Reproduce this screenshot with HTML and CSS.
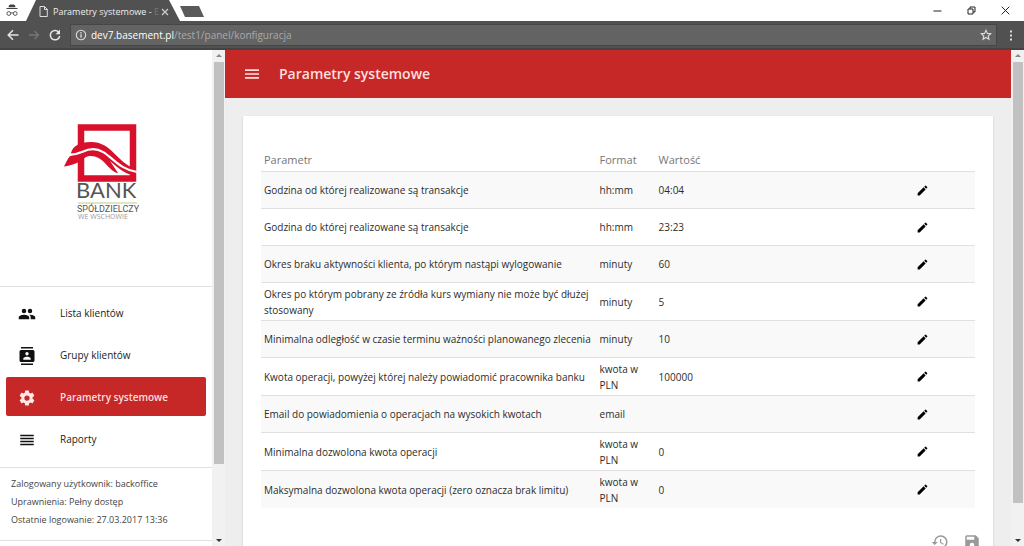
FILE: index.html
```html
<!DOCTYPE html>
<html lang="pl">
<head>
<meta charset="utf-8">
<meta name="viewport" content="width=device-width, initial-scale=1">
<title>Parametry systemowe</title>
<link rel="stylesheet" href="styles.css">
</head>
<body>
<svg class="sprite" aria-hidden="true">
  <symbol id="edit" viewBox="0 0 24 24"><path d="M3 17.25V21h3.75L17.81 9.94l-3.75-3.75L3 17.25zM20.71 7.04a1 1 0 0 0 0-1.41l-2.34-2.34a1 1 0 0 0-1.41 0l-1.83 1.83 3.75 3.75 1.83-1.83z"/></symbol>
</svg>
<div class="tabstrip">
  <svg class="incognito" viewBox="0 0 12 13" aria-hidden="true"><path d="M3 1.2 4.3.6h3.4l1.3.6.5 2H2.500zM.5 4h11v1H.5z" fill="#444"/><g fill="none" stroke="#555"><circle cx="2.800" cy="9.500" r="1.900"/><circle cx="9.200" cy="9.500" r="1.900"/><path d="M4.700 9.200q1.300-.8 2.600 0"/></g></svg>
  <div class="tab">
    <svg class="page-icon" viewBox="0 0 9 11" aria-hidden="true"><path d="M1 .5h4.500L8.300 3.300v7.200H1zM5.500.5v3h3" fill="none" stroke="#ddd"/></svg>
    <span class="tab-title">Parametry systemowe - <span class="faded">E</span></span>
    <button class="tab-close" aria-label="Zamknij kartę"><svg viewBox="0 0 8 8"><path d="M1 1l6 6M7 1 1 7" stroke="#ccc" stroke-width="1.200"/></svg></button>
  </div>
  <button class="new-tab" aria-label="Nowa karta"></button>
  <div class="window-buttons">
    <button aria-label="Minimalizuj"><svg viewBox="0 0 9 9"><path d="M.5 5h8" stroke="#222"/></svg></button>
    <button aria-label="Przywróć"><svg viewBox="0 0 9 9"><path d="M1 3h5v5H1zM3 3V1h5v5H6" fill="none" stroke="#222"/></svg></button>
    <button aria-label="Zamknij"><svg viewBox="0 0 9 9"><path d="M.7.7l7.600 7.600M8.300.7.7 8.300" stroke="#222"/></svg></button>
  </div>
</div>
<div class="toolbar">
  <button class="tool" aria-label="Wstecz"><svg viewBox="0 0 12 12"><path d="M11.500 6H1.500M6 1.200 1.200 6 6 10.800" fill="none" stroke="#e4e4e4" stroke-width="1.500"/></svg></button>
  <button class="tool" aria-label="Dalej"><svg viewBox="0 0 12 12"><path d="M1 6h9M6.500 2l4 4-4 4" fill="none" stroke="#777" stroke-width="1.300"/></svg></button>
  <button class="tool" aria-label="Odśwież"><svg viewBox="0 0 12 12"><path d="M10 3.500A4.700 4.700 0 1 0 10.700 7" fill="none" stroke="#e4e4e4" stroke-width="1.500"/><path d="M11 .6v4.600H6.500z" fill="#e4e4e4"/></svg></button>
  <div class="address">
    <svg viewBox="0 0 12 12" aria-hidden="true"><circle cx="6" cy="6" r="4.700" fill="none" stroke="#ddd" stroke-width="1.100"/><path d="M6 5.200v3.600M6 3.100v1.300" stroke="#ddd" stroke-width="1.300"/></svg>
    <span class="url"><b>dev7.basement.pl</b>/test1/panel/konfiguracja</span>
    <button class="tool" aria-label="Dodaj zakładkę"><svg viewBox="0 0 12 12"><path d="M6 1.300l1.400 3.100 3.400.3-2.600 2.300.8 3.300-3-1.800-3 1.800.8-3.300-2.600-2.300 3.400-.3z" fill="none" stroke="#ddd" stroke-width="1.100"/></svg></button>
  </div>
  <button class="tool" aria-label="Menu"><svg viewBox="0 0 12 12" fill="#ddd"><path d="M5 1.500h2v2H5zM5 5.500h2v2H5zM5 9.500h2v2H5z"/></svg></button>
</div>

<div class="page">
  <aside class="sidebar">
    <div class="sidebar-content">
      <div class="brand">
        <svg class="logo" viewBox="0 0 78 98" role="img" aria-label="Bank Spółdzielczy we Wschowie">
          <path d="M19 5.500h52v51h-52z" fill="none" stroke="#d8102c" stroke-width="6.500"/>
          <path d="M9 31C11 24 17 20 29 20 50 20 54 40 74 47.300V54C62 52 55 45 48 39L56 51C47 50 42 34 29 34 20 34 21 42 2 44.500 5 39 6 35 10 33z" fill="#d8102c"/>
          <path d="M7 32.800C20 32.500 21 27.200 31 27.200 47 27.200 53 47 75 50" fill="none" stroke="#fff" stroke-width="2.200"/>
          <text class="logo-bank" x="14" y="76">BANK</text>
          <path d="M16 81h59" stroke="#b9cf88"/>
          <text class="logo-sub" x="15" y="90">SPÓŁDZIELCZY</text>
          <text class="logo-place" x="16" y="97">WE WSCHOWIE</text>
        </svg>
      </div>
      <nav class="menu">
        <a href="#"><svg viewBox="0 0 24 24"><path d="M16 11a3 3 0 1 0 0-6 3 3 0 0 0 0 6zm-8 0a3 3 0 1 0 0-6 3 3 0 0 0 0 6zm0 2c-2.330 0-7 1.170-7 3.500V19h14v-2.500C15 14.170 10.330 13 8 13zm8 0c-.29 0-.62.02-.97.05A4.220 4.220 0 0 1 17 16.500V19h6v-2.500c0-2.330-4.670-3.500-7-3.500z"/></svg>Lista klientów</a>
        <a href="#"><svg viewBox="0 0 24 24"><path d="M20 0H4v2h16V0zM4 24h16v-2H4v2zM20 4H4a2 2 0 0 0-2 2v12c0 1.100.9 2 2 2h16a2 2 0 0 0 2-2V6a2 2 0 0 0-2-2zm-8 2.750a2.250 2.250 0 1 1 0 4.500 2.250 2.250 0 0 1 0-4.500zM17 17H7v-1.500c0-1.670 3.330-2.500 5-2.500s5 .83 5 2.500V17z"/></svg>Grupy klientów</a>
        <a href="#" class="active" aria-current="page"><svg viewBox="0 0 24 24"><path d="M19.430 12.980c.04-.32.07-.64.07-.98s-.03-.66-.07-.98l2.110-1.650c.19-.15.24-.42.12-.64l-2-3.460c-.12-.22-.39-.3-.61-.22l-2.490 1c-.52-.4-1.080-.73-1.690-.98l-.38-2.650A.488.488 0 0 0 14 2h-4c-.25 0-.46.18-.49.42l-.38 2.650c-.61.25-1.170.59-1.690.98l-2.490-1c-.23-.09-.49 0-.61.22l-2 3.460c-.13.22-.07.49.12.64l2.110 1.650c-.04.32-.07.65-.07.98s.03.66.07.98l-2.110 1.650c-.19.15-.24.42-.12.64l2 3.460c.12.22.39.3.61.22l2.490-1c.52.4 1.080.73 1.690.98l.38 2.650c.03.24.24.42.49.42h4c.25 0 .46-.18.49-.42l.38-2.650c.61-.25 1.170-.59 1.690-.98l2.490 1c.23.09.49 0 .61-.22l2-3.460c.12-.22.07-.49-.12-.64l-2.110-1.650zM12 15.500a3.500 3.500 0 1 1 0-7 3.500 3.500 0 0 1 0 7z"/></svg>Parametry systemowe</a>
        <a href="#"><svg viewBox="0 0 24 24"><path d="M3 15h18v-2H3v2zm0 4h18v-2H3v2zm0-8h18V9H3v2zm0-6v2h18V5H3z"/></svg>Raporty</a>
      </nav>
      <div class="session">
        <p>Zalogowany użytkownik: backoffice</p>
        <p>Uprawnienia: Pełny dostęp</p>
        <p>Ostatnie logowanie: 27.03.2017 13:36</p>
      </div>
    </div>
    <div class="scrollbar side" aria-hidden="true"><i class="up"></i><i class="thumb"></i><i class="down"></i></div>
  </aside>

  <main class="main">
    <header class="appbar">
      <button class="hamburger" aria-label="Menu"><svg viewBox="0 0 18 12"><path d="M0 12h18v-2H0v2zm0-5h18V5H0v2zm0-7v2h18V0H0z"/></svg></button>
      <h1>Parametry systemowe</h1>
    </header>
    <section class="card">
      <table class="params">
        <colgroup><col class="c-name"><col class="c-format"><col class="c-value"><col class="c-edit"></colgroup>
        <thead><tr><th>Parametr</th><th>Format</th><th>Wartość</th><td></td></tr></thead>
        <tbody>
          <tr><td>Godzina od której realizowane są transakcje</td><td>hh:mm</td><td>04:04</td><td><button aria-label="Edytuj"><svg><use href="#edit"/></svg></button></td></tr>
          <tr><td>Godzina do której realizowane są transakcje</td><td>hh:mm</td><td>23:23</td><td><button aria-label="Edytuj"><svg><use href="#edit"/></svg></button></td></tr>
          <tr><td>Okres braku aktywności klienta, po którym nastąpi wylogowanie</td><td>minuty</td><td>60</td><td><button aria-label="Edytuj"><svg><use href="#edit"/></svg></button></td></tr>
          <tr><td>Okres po którym pobrany ze źródła kurs wymiany nie może być dłużej stosowany</td><td>minuty</td><td>5</td><td><button aria-label="Edytuj"><svg><use href="#edit"/></svg></button></td></tr>
          <tr><td>Minimalna odległość w czasie terminu ważności planowanego zlecenia</td><td>minuty</td><td>10</td><td><button aria-label="Edytuj"><svg><use href="#edit"/></svg></button></td></tr>
          <tr><td>Kwota operacji, powyżej której należy powiadomić pracownika banku</td><td>kwota w PLN</td><td>100000</td><td><button aria-label="Edytuj"><svg><use href="#edit"/></svg></button></td></tr>
          <tr><td>Email do powiadomienia o operacjach na wysokich kwotach</td><td>email</td><td></td><td><button aria-label="Edytuj"><svg><use href="#edit"/></svg></button></td></tr>
          <tr><td>Minimalna dozwolona kwota operacji</td><td>kwota w PLN</td><td>0</td><td><button aria-label="Edytuj"><svg><use href="#edit"/></svg></button></td></tr>
          <tr><td>Maksymalna dozwolona kwota operacji (zero oznacza brak limitu)</td><td>kwota w PLN</td><td>0</td><td><button aria-label="Edytuj"><svg><use href="#edit"/></svg></button></td></tr>
        </tbody>
      </table>
      <div class="actions">
        <button aria-label="Historia"><svg viewBox="0 0 24 24"><path d="M13 3a9 9 0 0 0-9 9H1l3.890 3.890.07.14L9 12H6a7 7 0 1 1 2.060 4.940l-1.420 1.420A9 9 0 1 0 13 3zm-1 5v5l4.280 2.540.72-1.210-3.500-2.080V8H12z"/></svg></button>
        <button aria-label="Zapisz"><svg viewBox="0 0 24 24"><path d="M17 3H5a2 2 0 0 0-2 2v14a2 2 0 0 0 2 2h14a2 2 0 0 0 2-2V7l-4-4zm-5 16a3 3 0 1 1 0-6 3 3 0 0 1 0 6zm3-10H5V5h10v4z"/></svg></button>
      </div>
    </section>
  </main>
  <div class="scrollbar" aria-hidden="true"><i class="up"></i><i class="thumb long"></i><i class="down"></i></div>
</div>
</body>
</html>
```
FILE: styles.css
```css
* { box-sizing: border-box; }

body {
  margin: 0;
  height: 100vh;
  display: flex;
  flex-direction: column;
  overflow: hidden;
  background: #eee;
  color: #2c2c2c;
  font: 10px/16px "Open Sans", "Noto Sans", sans-serif;
}

button {
  padding: 0;
  border: 0;
  background: none;
  font: inherit;
}

svg { display: block; }
.sprite { display: none; }

/* Browser frame */
.tabstrip {
  flex: none;
  display: flex;
  height: 21px;
  background: #fff;
}
.incognito { width: 12px; height: 13px; margin: 4px 8px 0 6px; }
.tab {
  display: flex;
  align-items: center;
  width: 154px;
  padding: 2px 11px 0 13px;
  background: #515151;
  color: #eee;
  clip-path: polygon(0 100%, 10px 0, 143px 0, 100% 100%);
}
.page-icon { width: 9px; height: 11px; margin-right: 5px; }
.tab-title { flex: 1; font-size: 9px; white-space: nowrap; }
.faded { color: #777; }
.tab-close svg { width: 8px; height: 8px; }
.new-tab {
  width: 24px;
  height: 11px;
  margin-top: 6px;
  background: #5a5a5a;
  clip-path: polygon(0 0, 19px 0, 100% 100%, 5px 100%);
}
.window-buttons { display: flex; align-items: center; gap: 25px; margin-left: auto; padding-right: 14px; }
.window-buttons svg { width: 9px; height: 9px; }

.toolbar {
  flex: none;
  display: flex;
  align-items: center;
  gap: 9px;
  height: 29px;
  padding: 0 7px;
  background: #515151;
  border-bottom: 2px solid #444;
}
.tool svg, .address svg { width: 12px; height: 12px; }
.address {
  flex: 1;
  display: flex;
  align-items: center;
  gap: 4px;
  height: 22px;
  margin-right: -1px;
  padding: 0 4px;
  border: 1px solid #464646;
  background: #636363;
}
.url { flex: 1; color: #aaa; }
.url b { color: #fff; font-weight: 400; }

/* Page */
.page { flex: 1; display: flex; min-height: 0; }

.scrollbar {
  flex: none;
  display: flex;
  flex-direction: column;
  align-items: center;
  width: 13px;
  background: #f1f1f1;
}
.scrollbar i { flex: none; border: 3px solid transparent; }
.scrollbar .up { margin-top: 1px; border-bottom-color: #888; }
.scrollbar .down { margin-top: auto; margin-bottom: 1px; border-top-color: #333; }
.scrollbar .thumb { width: 10px; height: 81%; margin-top: 5px; border: 0; background: #c1c1c1; }
.scrollbar .long { height: 89%; }

.sidebar { flex: none; display: flex; width: 225px; background: #fff; }
.sidebar-content { flex: 1; min-width: 0; overflow: hidden; }
.brand { display: flex; height: 236px; padding: 72px 0 0 62px; }
.logo { width: 78px; height: 98px; font-family: "Open Sans", sans-serif; }
.logo-bank { font: 22px Lato, sans-serif; fill: #555; }
.logo-sub { font: 9px Roboto, sans-serif; fill: #555; }
.logo-place { font-size: 7px; fill: #999; }

.menu {
  display: flex;
  flex-direction: column;
  gap: 3px;
  padding: 6px 6px 9px;
  border-top: 1px solid #e0e0e0;
}
.menu a {
  display: flex;
  align-items: center;
  gap: 24px;
  height: 39px;
  padding-left: 12px;
  border-radius: 2px;
  color: #222;
  text-decoration: none;
  font-weight: 500;
}
.menu svg { width: 18px; height: 18px; margin-top: 2px; fill: #111; }
.menu .active { background: #c62828; color: #ffdede; font-weight: 600; }
.menu .active svg { fill: #ffe8e8; }

.session {
  padding: 7px 11px 11px;
  border: solid #e0e0e0;
  border-width: 1px 0;
  color: #444;
  font-size: 9px;
}
.session p { margin: 0; line-height: 18px; white-space: nowrap; }

.main { flex: 1; min-width: 0; overflow: hidden; }
.appbar { display: flex; align-items: center; gap: 20px; height: 48px; padding-left: 20px; background: #c62828; }
.hamburger svg { width: 14px; height: 10px; fill: #ffdede; }
.appbar h1 { margin: 0; color: #ffdede; font-size: 14px; line-height: 24px; font-weight: 600; }

.card {
  margin: 18px;
  padding: 34px 18px 18px;
  background: #fff;
  box-shadow: 0 1px 2px #0003;
}
.params { width: 100%; border-collapse: collapse; table-layout: fixed; }
.c-name { width: 47%; }
.c-format { width: 59px; }
.c-edit { width: 62px; }
.params th { height: 21px; padding: 0 3px; color: #777; font-size: 11px; font-weight: 400; text-align: left; }
.params tbody tr { height: 37px; border-top: 1px solid #e0e0e0; }
.params tbody tr:nth-child(odd) { background: #f9f9f9; }
.params tbody td { padding: 3px 3px 2px; }
.params button { display: block; }
.params svg { width: 13px; height: 13px; fill: #000; }

.actions { display: flex; justify-content: flex-end; gap: 14px; margin-right: -6px; padding-top: 25px; }
.actions svg { width: 18px; height: 18px; fill: #999; }
```
